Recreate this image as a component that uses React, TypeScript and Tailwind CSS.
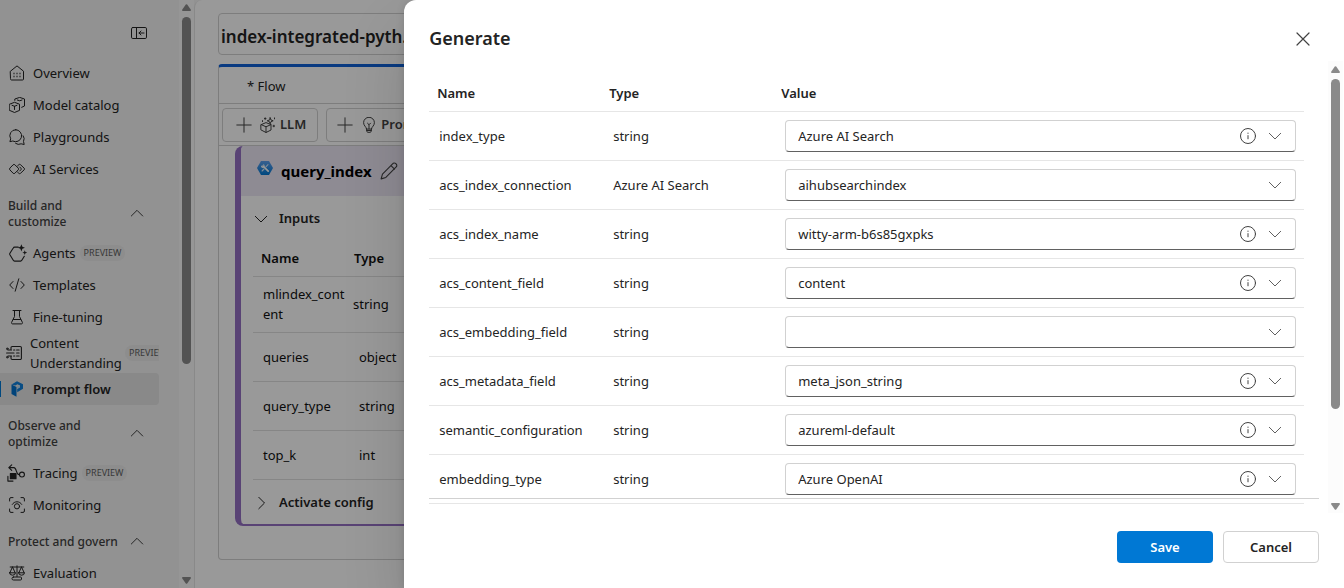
import React from "react";

type IconProps = { className?: string };

function Icon({ className = "size-4", children }: { className?: string; children: React.ReactNode }) {
  return (
    <svg viewBox="0 0 16 16" fill="none" stroke="currentColor" strokeWidth="1" strokeLinecap="round" strokeLinejoin="round" className={`shrink-0 ${className}`} aria-hidden="true">
      {children}
    </svg>
  );
}

const Home = () => (
  <Icon>
    <path d="M1.500 6.200 8 .9l6.500 5.300V14a1 1 0 0 1-1 1h-11a1 1 0 0 1-1-1Z" />
    <path d="M4.500 8.500h1M7.500 8.500h1M10.500 8.500h1M4.500 11.500h1M7.500 11.500h1M10.500 11.500h1" strokeWidth="1.400" strokeLinecap="butt" />
  </Icon>
);
const Catalog = () => (
  <Icon>
    <path d="M.6 7.200 5.500 5.300l5 1.900v6.200l-5 2.100L.6 13.400ZM3 8.300l2.500 1 2.500-1M5.500 9.300v3.200" />
    <path d="M5.800 3.400V2l4.900-1.600L15.500 2v7l-2.800 1.300M8.300 3l2.400.8L13 3" />
  </Icon>
);
const Chat = () => (
  <Icon>
    <path d="M6.800.7a6 6 0 1 1-3 11.300L.9 12.700l.8-2.900A6 6 0 0 1 6.800.7Z" />
    <path d="M6.600 14.400a5.300 5.300 0 0 0 5.500.4l3.100.7-.7-3.100a5.400 5.400 0 0 0-.3-5.600" />
  </Icon>
);
const Services = () => (
  <Icon>
    <path d="M4.200 3.700a1.100 1.100 0 0 1 1.600 0l3.500 3.500a1.100 1.100 0 0 1 0 1.600l-3.500 3.500a1.100 1.100 0 0 1-1.600 0L.8 8.800a1.100 1.100 0 0 1 0-1.600Z" />
    <path d="m8.600 4.800 1.300-1.100a1.100 1.100 0 0 1 1.600 0l3.700 3.500a1.100 1.100 0 0 1 0 1.600l-3.700 3.500a1.100 1.100 0 0 1-1.600 0l-1.300-1.100" />
    <path d="m10.700 6 1.200 1.200a1.100 1.100 0 0 1 0 1.600L10.700 10" />
  </Icon>
);
const Agents = () => (
  <Icon className="size-[18px] -mr-0.5">
    <path d="M8.200 2.800H5a1.300 1.300 0 0 0-1.200.7L.8 8.200a1.500 1.500 0 0 0 0 1.400l3 4.900a1.300 1.300 0 0 0 1.200.7h5.200a1.300 1.300 0 0 0 1.200-.7l2.200-3.600" />
    <path d="m11 .2.900 2.300 2.300.9-2.300.9-.9 2.300-.9-2.300-2.300-.9 2.300-.9ZM14 5.600l.6 1.500 1.500.6-1.500.6-.6 1.500-.6-1.500-1.500-.6 1.500-.6Z" fill="currentColor" stroke="none" />
  </Icon>
);
const Code = () => (
  <Icon>
    <path d="m4 4.500L.7 8 4 11.500M12 4.500 15.300 8 12 11.500M9.800 1.800 6.200 14.200" />
  </Icon>
);
const Flask = () => (
  <Icon>
    <path d="M4 1.500h8M5.500 1.500v6L2.600 13.400a1 1 0 0 0 .9 1.500h9a1 1 0 0 0 .9-1.500L10.500 7.500v-6M4.300 10.500h7.400" />
  </Icon>
);
const Content = () => (
  <Icon>
    <path d="M5 5V2.700A1.200 1.200 0 0 1 6.200 1.500h8a1.200 1.200 0 0 1 1.200 1.200v10.600a1.200 1.200 0 0 1-1.200 1.200h-8A1.200 1.200 0 0 1 5 13.300V11M.6 8H8M2 5h3.500M2 11h3.500M7.600 5h1.200M10.600 5h2.500M10.600 8h2.500M7.600 11h1.200M10.600 11h2.500" strokeWidth="1.100" />
    <circle cx="1.300" cy="3.800" r=".8" /><circle cx="1.300" cy="12.200" r=".8" />
  </Icon>
);
const PromptFlow = () => (
  <svg viewBox="0 0 16 16" className="size-4 shrink-0" aria-hidden="true">
    <path d="M2.500 3.600 8 .3l6 2.900v4.600L8.200 11.300V8L11 6.300V4.500L8.500 3.300 6.200 4.600Z" fill="#0f80dc" />
    <path d="m2.500 3.600 5 2.300V15.800L2.500 13Z" fill="#0070cc" />
    <path d="M8.200 5.500 11 4.300v2L8.200 7.900Z" fill="#b8dcf8" />
  </svg>
);
const Tracing = () => (
  <Icon className="size-[18px] -ml-0.5">
    <path d="M4.200.8 1.600 3.200l2.600 2.400M1.800 3.200h4.400c2.500 0 1.600 6.300 4.600 6.300" />
    <circle cx="13.300" cy="9.400" r="2.200" />
    <path d="M3 8.500h5v4.500H3Z" fill="currentColor" /><path d="M.8 11v4.200h4.500" />
  </Icon>
);
const Monitoring = () => (
  <Icon>
    <path d="M.6 4V2A1.400 1.400 0 0 1 2 .6h2M12 .6h2A1.400 1.400 0 0 1 15.400 2v2M15.400 12v2a1.400 1.400 0 0 1-1.400 1.400h-2M4 15.400H2A1.400 1.400 0 0 1 .6 14v-2M3.300 7.400C5.300 3.800 10.700 3.800 12.700 7.400" />
    <circle cx="8" cy="9.300" r="2.600" />
  </Icon>
);
const Scales = () => (
  <Icon>
    <path d="M1.200 2h13.600M8 .8v10.700M3.500 2 .8 7.800M3.500 2l2.700 5.800M12.500 2 9.800 7.800M12.500 2l2.700 5.800M.6 7.800h5.800a2.900 2.400 0 0 1-5.800 0ZM9.600 7.800h5.800a2.900 2.400 0 0 1-5.800 0ZM4.500 12h7a1 1 0 0 1 1 1v1a1 1 0 0 1-1 1h-7a1.500 1.500 0 0 1 0-3Z" />
  </Icon>
);
const Collapse = () => (
  <Icon>
    <rect x=".5" y="2.500" width="15" height="11" rx="1.300" /><path d="M5.500 2.500v11M13 8H8M10 6 8 8l2 2" />
  </Icon>
);
const Plus = () => (
  <Icon>
    <path d="M8 .8v14.400M.8 8h14.400" />
  </Icon>
);
const Cube = () => (
  <Icon>
    <path d="m1.200 7.600 4.800-2 5 2V13L6 15.500 1.200 13ZM1.200 7.600 6 9.800l5-2.200M6 9.800v5.500" />
    <path d="m10.200.8.800 2.200 2.200.8-2.200.8-.8 2.200-.8-2.200-2.200-.8 2.200-.8ZM5.200.8v1.600M4.400 1.600H6M13.800 8.200v1.600M13 9h1.600M14.500.9v1M2.500 3.600v1" />
  </Icon>
);
const Bulb = () => (
  <Icon>
    <path d="M5.500 11.700C5.300 9.800 2.600 8.700 2.600 5.700a5.400 5.400 0 0 1 10.800 0c0 3-2.700 4.100-2.900 6ZM5.500 11.700l.4 2.700a1 1 0 0 0 1 .9h2.200a1 1 0 0 0 1-.9l.4-2.700M5.700 13.500h4.600M6.500 6.200 8 7.700l1.500-1.500M8 7.700v4" />
  </Icon>
);
const Pencil = () => (
  <Icon className="size-[18px]">
    <path d="M11.200 1.700a1.800 1.800 0 0 1 2.900-.2 1.900 1.900 0 0 1 .3 2.900L5.200 13.700 1 15l1.200-4.200ZM9.800 3.200l3.100 3.100" />
  </Icon>
);
const Tool = () => (
  <svg viewBox="0 0 16 16" className="size-4 shrink-0" aria-hidden="true">
    <defs>
      <linearGradient id="tool-fill" x1="0" y1="0" x2="0" y2="1">
        <stop offset="0" stopColor="#5ea0ef" /><stop offset="1" stopColor="#0078d4" />
      </linearGradient>
    </defs>
    <path d="M4 1h8l4 7-4 7H4L0 8Z" fill="url(#tool-fill)" />
    <path d="m6 6 5.200 5.200" stroke="#fff" strokeWidth="1.700" strokeLinecap="round" />
    <path d="M4.300 5.200 5.200 6.500l1.300-.2.300-1.300-1.200-1.100a2.100 2.100 0 0 1 1.900 2.600 2.100 2.100 0 0 1-3.200.7 2.100 2.100 0 0 1 0-2Z" fill="#fff" />
    <path d="M11 4.700 8.900 6.900M7 9l-1.900 2" stroke="#d6e8fb" strokeWidth="1.100" strokeLinecap="round" />
  </svg>
);
const ChevronDown = ({ className = "size-4" }: IconProps) => (
  <Icon className={className}>
    <path d="M2.300 5.300 8 11l5.700-5.700" />
  </Icon>
);
const ChevronUp = () => (
  <Icon>
    <path d="M2.300 10 8 4.300l5.700 5.700" />
  </Icon>
);
const ChevronRight = () => (
  <Icon>
    <path d="M5.800 2.300 11.500 8l-5.700 5.700" />
  </Icon>
);
const Info = () => (
  <Icon>
    <circle cx="8" cy="8" r="7.500" /><path d="M8 7.200v4" strokeLinecap="butt" /><circle cx="8" cy="5.200" r=".6" fill="currentColor" stroke="none" />
  </Icon>
);
const Close = () => (
  <Icon>
    <path d="m2 2 12 12M14 2 2 14" strokeWidth="1.200" />
  </Icon>
);

const Arrow = ({ down = false }: { down?: boolean }) => (
  <svg viewBox="0 0 9 7" className={down ? "h-[7px] w-[9px] shrink-0 rotate-180" : "h-[7px] w-[9px] shrink-0"} aria-hidden="true">
    <path d="M3.800.6a1 1 0 0 1 1.400 0L8.700 5.500A1 1 0 0 1 8 7H1A1 1 0 0 1 .3 5.500Z" fill="#8a8a8a" />
  </svg>
);

function Preview() {
  return <span className="rounded-full bg-[#ebebeb] px-1 text-[9px] leading-4 text-[#616161]">PREVIEW</span>;
}

function Item({ icon, label, preview }: { icon: React.ReactNode; label: string; preview?: boolean }) {
  return (
    <a href="#" className="flex h-8 items-center gap-2 pl-[9px] text-[13px] leading-5 text-[#242424]">
      {icon}
      <span className="flex items-center gap-1 whitespace-nowrap">
        {label}
        {preview && <Preview />}
      </span>
    </a>
  );
}

function Section({ label }: { label: string }) {
  return (
    <button className="flex w-full items-center justify-between pt-[13px] pr-3.5 pb-[7px] pl-2 text-left text-xs leading-4 font-medium text-[#424242]">
      <span className="max-w-28">{label}</span>
      <ChevronUp />
    </button>
  );
}

function Sidebar() {
  return (
    <aside className="flex w-[194px] shrink-0 bg-[#f3f3f3]">
      <nav className="w-[159px] shrink-0">
        <div className="flex h-[57px] items-center justify-end pt-2 pr-3">
          <button aria-label="Collapse navigation" className="text-[#242424]"><Collapse /></button>
        </div>
        <Item icon={<Home />} label="Overview" />
        <Item icon={<Catalog />} label="Model catalog" />
        <Item icon={<Chat />} label="Playgrounds" />
        <Item icon={<Services />} label="AI Services" />
        <Section label="Build and customize" />
        <Item icon={<Agents />} label="Agents" preview />
        <Item icon={<Code />} label="Templates" />
        <Item icon={<Flask />} label="Fine-tuning" />
        <a href="#" className="flex h-10 items-center gap-1.5 overflow-hidden pl-1.5 text-[13px] leading-5 text-[#242424]">
          <Content />
          <span className="w-[91px] shrink-0 pl-0.5">Content Understanding</span>
          <Preview />
        </a>
        <a href="#" aria-current="page" className="relative flex h-8 items-center gap-2 rounded-r bg-[#e4e4e4] pl-[9px] text-[13px] leading-5 font-semibold text-[#242424]">
          <span className="absolute left-0 h-4 w-px bg-[#0078d4]" />
          <PromptFlow />
          Prompt flow
        </a>
        <Section label="Observe and optimize" />
        <Item icon={<Tracing />} label="Tracing" preview />
        <Item icon={<Monitoring />} label="Monitoring" />
        <Section label="Protect and govern" />
        <Item icon={<Scales />} label="Evaluation" />
      </nav>
      <div className="ml-auto flex w-[15px] flex-col items-center bg-[#fafafa] py-1">
        <Arrow />
        <div className="mt-1.5 h-[347px] w-[9px] rounded-full bg-[#8a8a8a]" />
        <div className="mt-auto"><Arrow down /></div>
      </div>
    </aside>
  );
}

const inputs = [
  { name: "mlindex_content", type: "string", wide: true },
  { name: "queries", type: "object" },
  { name: "query_type", type: "string" },
  { name: "top_k", type: "int" },
];

function FlowPage() {
  return (
    <main className="min-w-0 flex-1 overflow-hidden rounded-tl-lg border-l border-[#e4e4e4] bg-white px-[23px] pt-[13px]">
      <input aria-label="Flow name" defaultValue="index-integrated-pyth..." className="block h-[42px] w-full rounded border border-[#d1d1d1] px-0.5 pt-1 text-[17px] font-semibold text-[#242424]" />
      <section className="mt-[9px] h-[496px] overflow-hidden rounded border border-t-[3px] border-[#d1d1d1] border-t-[#0f62d8]">
        <div className="flex h-[37px] items-center border-b border-[#d1d1d1] pt-1 pl-7 text-[13px] text-[#242424]">* Flow</div>
        <div className="flex h-[42px] items-center gap-2 border-b border-[#d1d1d1] px-[3px]">
          <button className="flex h-[34px] shrink-0 items-center gap-2 rounded border border-[#d1d1d1] pr-[11px] pl-[13px] text-[13px] font-semibold text-[#424242]">
            <Plus />
            <span className="flex items-center gap-1"><Cube />LLM</span>
          </button>
          <button className="flex h-[34px] shrink-0 items-center gap-2 rounded border border-[#d1d1d1] px-2.5 text-[13px] font-semibold text-[#424242]">
            <Plus />
            <span className="flex items-center gap-1"><Bulb />Prompt</span>
          </button>
        </div>
        <div className="ml-4 rounded-l-lg rounded-r-lg border-b-2 border-l-[6px] border-[#9470c4] bg-white">
          <header className="flex h-[50px] items-center gap-2 rounded-tl-sm bg-[#ede8f6] pl-4">
            <span className="-mt-1.5"><Tool /></span>
            <h2 className="text-[15px] font-bold text-black">query_index</h2>
            <button aria-label="Rename" className="text-[#424242]"><Pencil /></button>
          </header>
          <button className="flex h-11 items-center gap-2.5 pt-0.5 pl-3 text-[13px] font-semibold text-[#242424]"><ChevronDown />Inputs</button>
          <div className="pl-3">
            <table className="w-full table-fixed text-left text-[13px] leading-5 text-[#111]">
              <colgroup><col className="w-24" /><col /></colgroup>
              <thead>
                <tr className="h-9 border-b border-[#e0e0e0]"><th className="pl-2 font-semibold">Name</th><th className="pl-[5px] font-semibold">Type</th></tr>
              </thead>
              <tbody>
                {inputs.map((r) => (
                  <tr key={r.name} className={r.wide ? "h-14 border-b border-[#e0e0e0]" : "h-[49px] border-b border-[#e0e0e0]"}>
                    <td className="pr-0.5 pl-2.5 break-all">{r.name}</td>
                    <td className={r.wide ? "pl-1" : "pl-2.5"}>{r.type}</td>
                  </tr>
                ))}
              </tbody>
            </table>
          </div>
          <button className="flex h-11 items-center gap-2.5 pt-0.5 pl-3 text-[13px] font-semibold text-[#242424]"><ChevronRight />Activate config</button>
        </div>
      </section>
    </main>
  );
}

const fields = [
  { name: "index_type", type: "string", value: "Azure AI Search", info: true },
  { name: "acs_index_connection", type: "Azure AI Search", value: "aihubsearchindex", info: false },
  { name: "acs_index_name", type: "string", value: "witty-arm-b6s85gxpks", info: true },
  { name: "acs_content_field", type: "string", value: "content", info: true },
  { name: "acs_embedding_field", type: "string", value: "", info: false },
  { name: "acs_metadata_field", type: "string", value: "meta_json_string", info: true },
  { name: "semantic_configuration", type: "string", value: "azureml-default", info: true },
  { name: "embedding_type", type: "string", value: "Azure OpenAI", info: true },
];

function GenerateDrawer() {
  return (
    <div role="dialog" aria-modal="true" aria-labelledby="drawer-title" className="absolute inset-y-0 right-0 flex w-[calc(70%-1px)] flex-col rounded-tl-xl bg-white text-[13px] leading-5 text-[#242424] shadow-[0_0_8px_rgba(0,0,0,0.12),0_32px_64px_rgba(0,0,0,0.14)]">
      <header className="flex h-[61px] shrink-0 items-center justify-between pt-4 pr-[33px] pl-[25px]">
        <h1 id="drawer-title" className="pb-0.5 text-lg leading-7 font-semibold">Generate</h1>
        <button aria-label="Close" className="text-[#424242]"><Close /></button>
      </header>
      <div className="relative flex min-h-0 flex-1">
        <div className="min-w-0 flex-1 overflow-hidden pt-3.5 pr-6 pl-[25px]">
          <table className="w-full table-fixed text-left">
            <colgroup><col className="w-[172px]" /><col className="w-[172px]" /><col /></colgroup>
            <thead>
              <tr className="h-9 border-b border-[#e6e6e6]">
                <th className="pl-2 font-semibold">Name</th><th className="pl-2 font-semibold">Type</th><th className="pl-2 font-semibold">Value</th>
              </tr>
            </thead>
            <tbody>
              {fields.map((f) => (
                <tr key={f.name} className="h-[49px] border-b border-[#e6e6e6]">
                  <td className="pl-2.5"><label htmlFor={f.name}>{f.name}</label></td>
                  <td className="pl-3">{f.type}</td>
                  <td className="pr-2 pl-3">
                    <div className="relative flex items-center">
                      <select id={f.name} defaultValue={f.value} className="h-8 w-full appearance-none rounded border border-[#d1d1d1] border-b-[#616161] bg-white pr-16 pl-3">
                        <option value={f.value}>{f.value}</option>
                      </select>
                      {f.info && <button aria-label={`About ${f.name}`} className="absolute right-10 text-[#424242]"><Info /></button>}
                      <span className="pointer-events-none absolute right-3 flex size-[18px] items-center justify-center text-[#616161]"><ChevronDown /></span>
                    </div>
                  </td>
                </tr>
              ))}
            </tbody>
          </table>
        </div>
        <div className="mr-px flex w-[15px] shrink-0 flex-col items-center bg-[#fcfcfc] pt-[5px] pb-[3px]">
          <Arrow />
          <div className="mt-1.5 h-[330px] w-[9px] rounded-full bg-[#8a8a8a]" />
          <div className="mt-auto"><Arrow down /></div>
        </div>
        <div className="absolute right-[25px] bottom-3.5 left-[25px] h-px bg-[#d1d1d1]" />
      </div>
      <footer className="flex shrink-0 justify-end gap-2.5 pt-[18px] pr-[25px] pb-[25px]">
        <button className="h-8 w-24 rounded bg-[#0078d4] font-semibold text-white">Save</button>
        <button className="h-8 w-24 rounded border border-[#d1d1d1] bg-white font-semibold">Cancel</button>
      </footer>
    </div>
  );
}

export default function App() {
  return (
    <div className="relative h-screen overflow-hidden bg-[#f3f3f3] font-['Noto_Sans','Open_Sans',sans-serif]">
      <div className="flex h-full">
        <Sidebar />
        <FlowPage />
      </div>
      <div className="absolute inset-0 bg-black/40" />
      <GenerateDrawer />
    </div>
  );
}
